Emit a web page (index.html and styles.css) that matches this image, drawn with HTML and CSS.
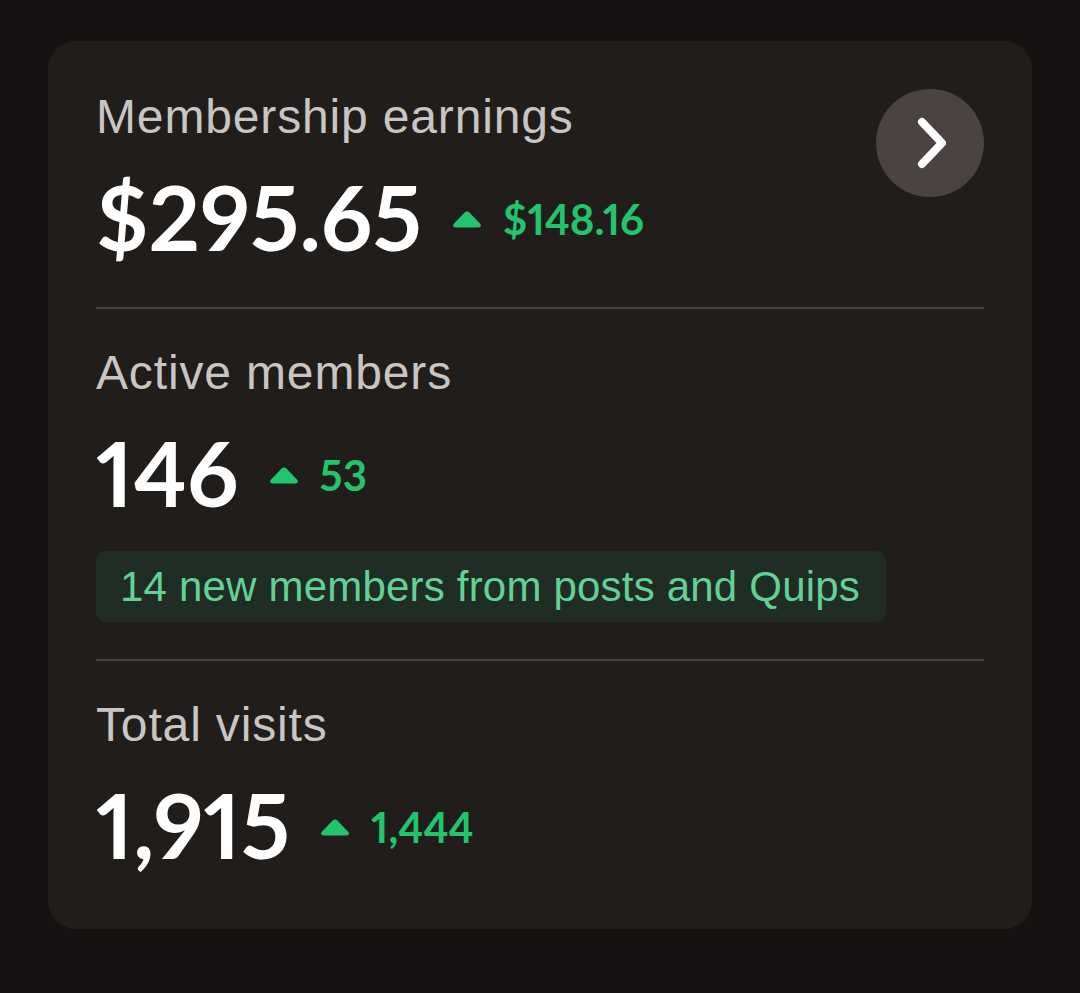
FILE: index.html
```html
<!DOCTYPE html>
<html lang="en">
<head>
    <meta charset="UTF-8">
    <meta name="viewport" content="width=device-width, initial-scale=1.0">
    <title>Earnings</title>
    <link rel="stylesheet" href="styles.css">
</head>
<body>

    <div id="card">
        <div class="section first">
            <div class="head">
                <div>
                    <div class="label">Membership earnings</div>
                    <div class="row">
                        <span class="value">$295.65</span>
                        <span class="delta">
                            <svg class="up" viewBox="0 0 30 17"><path d="M12.6 1.6 Q15 -0.6 17.4 1.6 L28.4 13 Q30 16.5 26.5 16.5 L3.5 16.5 Q0 16.5 1.6 13 Z"/></svg>
                            <span>$148.16</span>
                        </span>
                    </div>
                </div>
                <div class="next">
                    <svg viewBox="0 0 108 108"><path d="M46 33 L66 54 L46 75"/></svg>
                </div>
            </div>
        </div>

        <div class="section">
            <div class="label">Active members</div>
            <div class="row">
                <span class="value">146</span>
                <span class="delta">
                    <svg class="up" viewBox="0 0 30 17"><path d="M12.6 1.6 Q15 -0.6 17.4 1.6 L28.4 13 Q30 16.5 26.5 16.5 L3.5 16.5 Q0 16.5 1.6 13 Z"/></svg>
                    <span>53</span>
                </span>
            </div>
            <div class="pill">14 new members from posts and Quips</div>
        </div>

        <div class="section last">
            <div class="label">Total visits</div>
            <div class="row">
                <span class="value">1,915</span>
                <span class="delta">
                    <svg class="up" viewBox="0 0 30 17"><path d="M12.6 1.6 Q15 -0.6 17.4 1.6 L28.4 13 Q30 16.5 26.5 16.5 L3.5 16.5 Q0 16.5 1.6 13 Z"/></svg>
                    <span>1,444</span>
                </span>
            </div>
        </div>
    </div>

</body>
</html>
```

FILE: styles.css
```css
body {
    margin: 0;
    background: #161211;
    font-family: "Liberation Sans", Arial, sans-serif;
    padding: 41px 48px 0;
}

#card {
    background: #211d1b;
    border-radius: 28px;
    padding: 48px 48px 51px;
    width: 888px;
}

.section {
    padding: 36px 0 37px;
    border-bottom: 2px solid #4a4544;
}

.section.first {
    padding-top: 0;
}

.section.last {
    border-bottom: none;
    padding-bottom: 0;
}

.head {
    display: flex;
    justify-content: space-between;
    align-items: flex-start;
}

.label {
    font-size: 48px;
    line-height: 56px;
    letter-spacing: 0.85px;
    color: #c9c5c4;
}

.row {
    display: flex;
    align-items: center;
    margin: 21px 0 4px;
    font-family: Lato, "Liberation Sans", sans-serif;
    font-variant-numeric: proportional-nums;
}

.value {
    font-size: 90px;
    line-height: 100px;
    font-weight: bold;
    color: #ffffff;
}

.delta {
    display: flex;
    align-items: center;
    margin-left: 30px;
    padding-top: 6px;
    font-size: 42px;
    line-height: 48px;
    font-weight: bold;
    color: #22c46c;
}

.delta .up {
    width: 30px;
    height: 17px;
    margin-right: 21px;
    margin-top: 1px;
    fill: #22c46c;
}

.next {
    width: 108px;
    height: 108px;
    border-radius: 50%;
    background: #4a4341;
}

.next svg {
    width: 108px;
    height: 108px;
    fill: none;
    stroke: #ffffff;
    stroke-width: 8;
    stroke-linecap: round;
    stroke-linejoin: round;
}

.pill {
    display: inline-block;
    margin-top: 25px;
    padding: 12px 26px 11px 24px;
    border-radius: 10px;
    background: #1f2d24;
    color: #63d095;
    font-size: 42px;
    line-height: 48px;
    letter-spacing: 0.2px;
}
```
